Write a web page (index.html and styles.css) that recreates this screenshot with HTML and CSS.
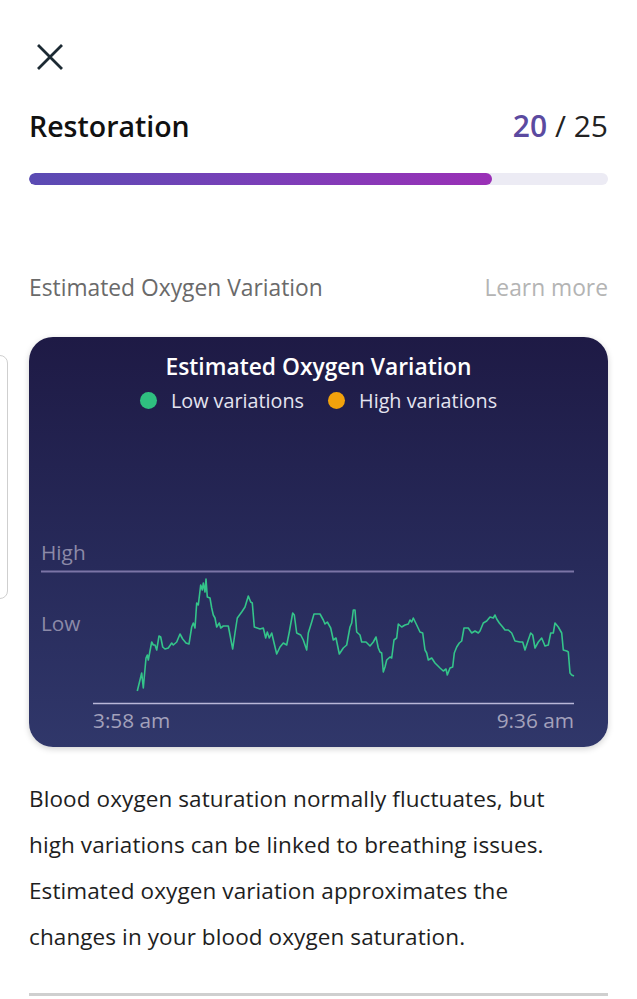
FILE: index.html
```html
<!DOCTYPE html>
<html lang="en">
<head>
<meta charset="utf-8">
<title>Restoration</title>
<link rel="stylesheet" href="styles.css">
</head>
<body>
<div class="edge-card"></div>
<main class="page">
  <button class="close" aria-label="Close">
    <svg width="26" height="26" viewBox="0 0 26 26"><path d="M2 2 L24 24 M24 2 L2 24" stroke="#1c2a33" stroke-width="2.8" stroke-linecap="square" fill="none"/></svg>
  </button>
  <div class="score-row">
    <h1 class="score-title">Restoration</h1>
    <div class="score"><span class="score-val">20</span> / 25</div>
  </div>
  <div class="bar"><div class="bar-fill" style="width:80%"></div></div>
  <div class="section-row">
    <span class="section-title">Estimated Oxygen Variation</span>
    <span class="learn">Learn more</span>
  </div>
  <section class="card">
    <h2 class="card-title">Estimated Oxygen Variation</h2>
    <div class="legend">
      <span class="dot dot-low"></span><span class="legend-text">Low variations</span>
      <span class="dot dot-high"></span><span class="legend-text">High variations</span>
    </div>
    <svg class="chart" width="579" height="210" viewBox="29 530 579 210">
      <text x="41" y="559.5" class="axis-label">High</text>
      <line x1="41" y1="571.5" x2="574" y2="571.5" class="grid-high"/>
      <text x="41" y="630.5" class="axis-label">Low</text>
      <line x1="93" y1="703.5" x2="574" y2="703.5" class="grid-base"/>
      <text x="93" y="727.5" class="time-label">3:58 am</text>
      <text x="574" y="727.5" class="time-label" text-anchor="end">9:36 am</text>
      <polyline class="trace" points="137.3,691 141.7,673 143.3,688 146,658 147.3,655 148.3,660 151.7,642 153.3,645 155,645 156.7,650 159,636 160.7,637 162.7,647 165,649 168.3,648 171.7,643 173.3,645 176.7,642 180,634 182.7,639 186,643 189,644 191.7,627 193.3,623 195,628 196.7,603 198.3,605 200.7,585 202.3,590 203.3,583 205,592 206,579 207.3,597 210,598 211.7,608 213.3,615 215,618 216.7,627 219.3,623 220.7,628 223.3,626 228.3,626 232.7,649 235,633 237.3,618 241.7,612 245,607 248.3,596 250.7,602 252.3,603 254.3,627 260,629 263.3,628 265.7,638 267.3,632 269.3,638 271.7,633 276.7,654 280,647 283.3,643 286.7,645 289.3,632 292.7,613 294.3,615 296.7,633 300.7,635 303.3,640 306.7,650 308.3,633 311.7,622 314,614 320,614 323.3,620 325,624 327.3,622 330.7,628 333.3,640 336,638 339.3,654 343.3,648 346.7,645 350,627 351.7,623 353.3,610 355,610 356.7,632 360,635 361.7,642 366,642 370,646 373.3,642 376,637 378.3,648 380,652 381.7,653 383.3,672 385,667 386.7,660 390,657 391.7,658 394,640 396.7,638 398.3,624 401.7,627 405,625 408.3,624 410,620 411.7,622 413.3,618 416.7,625 420,632 422.7,633 425,650 426.7,653 428.3,660 431.7,658 435,663 440,668 443.3,671 446,669 447.3,675 450,668 452.7,667 454.3,653 456.7,647 459.3,643 461.7,641 464,628 468.3,628 471.7,633 475,631 478.3,633 480,631 483.3,623 486.7,621 490,617 493.3,618 495,615 496.7,619 499.3,623 502.7,627 505,630 508.3,630 511.7,633 515,641 520,642 522.7,642 525,650 528.3,640 530.7,633 532.7,635 535,648 538.3,642 541.7,638 545,646 548.3,645 550.7,633 553.3,633 555,623 558.3,627 561.7,633 563.3,650 566.7,651 568.3,652 570,673 571.7,675 574,676"/>
    </svg>
  </section>
  <p class="desc">Blood oxygen saturation normally fluctuates, but<br>high variations can be linked to breathing issues.<br>Estimated oxygen variation approximates the<br>changes in your blood oxygen saturation.</p>
  <hr class="divider">
</main>
</body>
</html>
```
FILE: styles.css
```css
* { box-sizing: border-box; }
html, body { margin: 0; padding: 0; background: #fff; }
body {
  font-family: "Open Sans", "Liberation Sans", sans-serif;
  color: #1e1e1e;
  width: 637px;
  height: 999px;
  overflow: hidden;
  position: relative;
}
.page {
  padding: 0 29px;
  display: flex;
  flex-direction: column;
}
.edge-card {
  position: absolute;
  left: -10px;
  top: 355px;
  width: 18px;
  height: 244px;
  border: 1px solid #cfcfcf;
  border-radius: 8px;
  background: #fff;
}
.close {
  margin: 44px 0 0 8px;
  padding: 0;
  border: 0;
  background: none;
  width: 26px;
  height: 26px;
  display: block;
}
.close svg { display: block; }
.score-row {
  margin-top: 39px;
  display: flex;
  justify-content: space-between;
  align-items: center;
  height: 34px;
}
.score-title {
  margin: 0;
  font-size: 28.5px;
  line-height: 34px;
  font-weight: 600;
  color: #111;
}
.score {
  font-size: 30px;
  line-height: 34px;
  color: #222;
}
.score-val { color: #5b4aa0; font-weight: 600; }
.bar {
  margin-top: 30px;
  height: 12px;
  border-radius: 6px;
  background: #ecebf4;
  overflow: hidden;
}
.bar-fill {
  height: 100%;
  border-radius: 6px;
  background: linear-gradient(90deg, #5a4bb3 0%, #7a3fb8 50%, #9a30b6 100%);
}
.section-row {
  margin-top: 89px;
  display: flex;
  justify-content: space-between;
  align-items: center;
  height: 26px;
  font-size: 22.8px;
}
.section-title { color: #6a6a6a; }
.learn { color: #b4b4b4; }
.card {
  margin-top: 37px;
  height: 410px;
  border-radius: 24px;
  background: linear-gradient(180deg, #1e1a45 0%, #272a5a 55%, #30376a 100%);
  box-shadow: 0 2px 6px rgba(0,0,0,0.18);
  display: flex;
  flex-direction: column;
  align-items: center;
  overflow: hidden;
}
.card-title {
  margin: 17px 0 0;
  font-size: 22.8px;
  line-height: 26px;
  font-weight: 600;
  color: #fff;
}
.legend {
  margin-top: 8px;
  display: flex;
  align-items: center;
  height: 24px;
  font-size: 19.8px;
  color: #e4e4f0;
}
.dot {
  width: 17px;
  height: 17px;
  border-radius: 50%;
  margin-right: 14px;
}
.dot-low { background: #2fbf80; }
.dot-high { background: #f2a20c; margin-left: 24px; }
.chart {
  display: block;
  margin-top: auto;
  margin-bottom: 7px;
}
.axis-label { font-family: "Open Sans", "Liberation Sans", sans-serif; font-size: 20.8px; fill: #8c8aa8; }
.time-label { font-family: "Open Sans", "Liberation Sans", sans-serif; font-size: 20.8px; fill: #a3a1bb; }
.grid-high { stroke: #7b74a6; stroke-width: 2; }
.grid-base { stroke: #b9b7d8; stroke-width: 1.5; }
.trace { fill: none; stroke: #34c48a; stroke-width: 1.6; stroke-linejoin: round; }
.desc {
  margin: 29px 0 0;
  font-size: 22.5px;
  letter-spacing: 0.1px;
  line-height: 46px;
  color: #1e1e1e;
  white-space: nowrap;
}
.divider {
  margin: 33px 0 0;
  border: 0;
  height: 3px;
  background: #cfcfcf;
}
```
